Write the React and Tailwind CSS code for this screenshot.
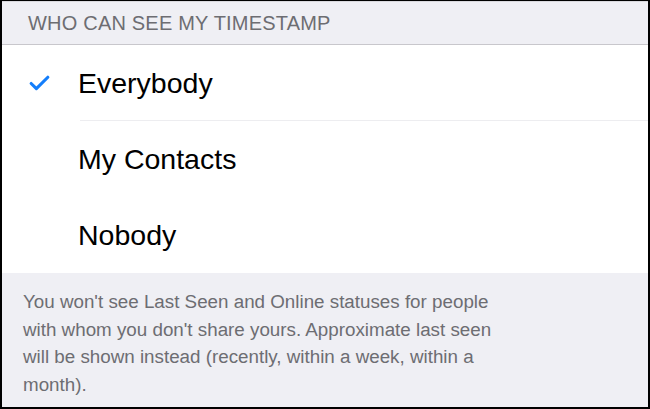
import { Check } from "lucide-react";

const options = ["Everybody", "My Contacts", "Nobody"];

export default function App() {
  const selected = "Everybody";

  return (
    <div
      className="w-[650px] h-[409px] bg-black pt-px pl-[2px] pr-[2px] pb-[2px] overflow-hidden"
      style={{ fontFamily: '"Liberation Sans", Arial, sans-serif' }}
    >
      <div className="h-full flex flex-col bg-[#efeff4]">
        {/* section header */}
        <div className="h-[44px] border-t border-[#d9d9de] flex items-start pt-[6px] pl-[26px] border-b border-b-[#c8c7cc]">
          <span className="text-[20px] text-[#6d6d72] tracking-[0.2px]">WHO CAN SEE MY TIMESTAMP</span>
        </div>

        {/* options */}
        <div className="bg-white">
          {options.map((opt, i) => (
            <div key={opt} className="h-[76px] flex items-center relative">
              <div className="w-[76px] flex justify-center pr-[2px]">
                {opt === selected && (
                  <Check className="w-[25px] h-[25px] text-[#147efb]" strokeWidth={3} />
                )}
              </div>
              <span className="text-[28.5px] text-black">{opt}</span>
              {i === 0 && (
                <div className="absolute bottom-0 left-[78px] right-0 h-px bg-[#ededf0]" />
              )}
            </div>
          ))}
        </div>

        {/* footer */}
        <div className="w-[502px] pl-[21px] pt-[15px] text-[18.8px] leading-[27.5px] text-[#6d6d72]">
          You won't see Last Seen and Online statuses for people with whom you don't share yours.
          Approximate last seen will be shown instead (recently, within a week, within a month).
        </div>
      </div>
    </div>
  );
}
